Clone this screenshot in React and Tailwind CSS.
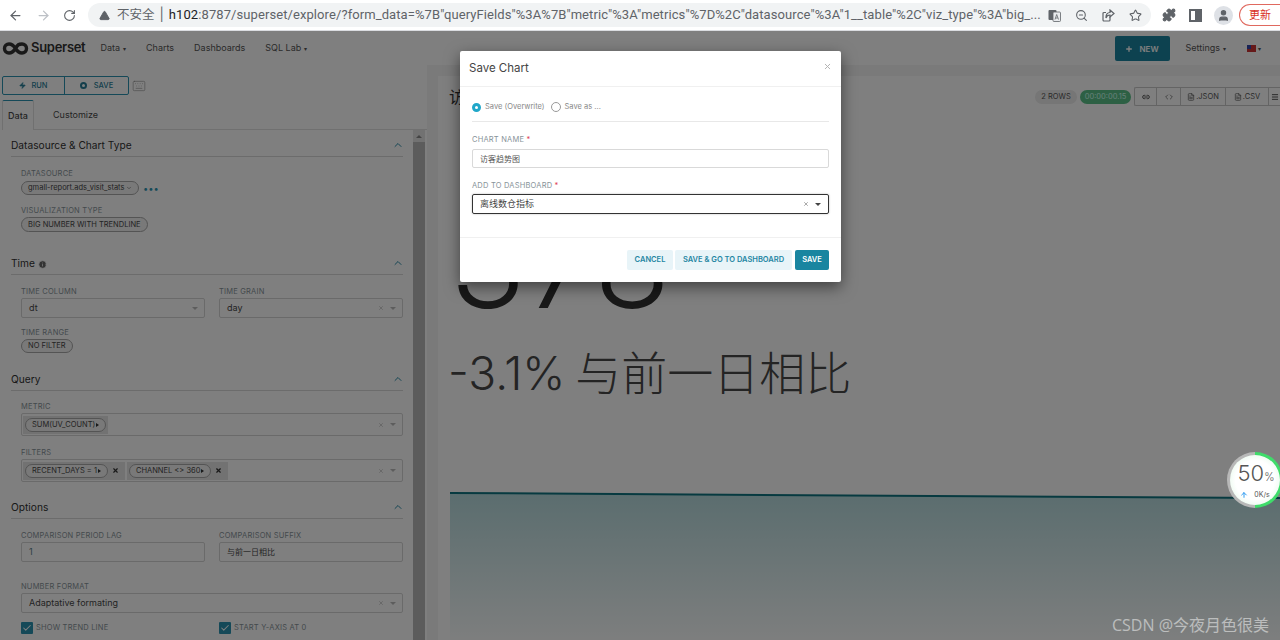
import { ArrowLeft, ArrowRight, RotateCw, TriangleAlert, ZoomOut, Star, Puzzle, User, Plus, Zap, Keyboard, ChevronDown, ChevronUp, Info, X, Link2, Code, FileText, Check, Menu, ArrowUp } from 'lucide-react';

const LABEL = 'text-[7.5px] leading-[10px] tracking-[0.2px] text-[#879399] uppercase';

function Carets({ clear = true }) {
  return (
    <div className="flex items-center gap-[6px] ml-auto pr-[6px] text-[#b5b5b5]">
      {clear && <X size={6} strokeWidth={2.5} />}
      <span className="w-0 h-0 border-x-[3.5px] border-x-transparent border-t-[3.5px] border-t-[#bbbbbb]" />
    </div>
  );
}

function Section({ title, info, top, children }) {
  return (
    <div className={top}>
      <div className="flex items-center h-[21px] border-b border-[#d9d9d9] ml-[11px] w-[392px]">
        <span className="text-[10.2px] text-[#323232]">{title}</span>
        {info && <Info size={9} className="ml-[3px] text-white fill-[#666]" />}
        <ChevronUp size={12} strokeWidth={2} className="ml-auto mr-[-1px] mb-[3px] text-[#2a8ca8]" />
      </div>
      <div className="pl-[21px]">{children}</div>
    </div>
  );
}

function Pill({ children, className = '' }) {
  return (
    <span className={`flex w-fit items-center h-[14px] px-[6px] rounded-full border border-[#a8a8a8] bg-[#f2f2f2] text-[7.5px] text-[#484848] whitespace-nowrap ${className}`}>
      {children}
    </span>
  );
}

function Select({ value, clear, className = '' }) {
  return (
    <div className={`flex items-center h-[20px] border border-[#d4d4d4] rounded-[2px] bg-white pl-[7px] text-[9px] text-[#484848] ${className}`}>
      {value}
      <Carets clear={clear} />
    </div>
  );
}

function Tag({ text, remove }) {
  return (
    <div className="flex items-center h-[18px] bg-[#e4e4e4] px-[2px] mr-[2px]">
      <Pill>{text}<span className="ml-[1px] w-0 h-0 border-y-[2.5px] border-y-transparent border-l-[3px] border-l-[#333]" /></Pill>
      {remove && <X size={7} strokeWidth={4} className="mx-[4px] text-[#333]" />}
    </div>
  );
}

function Sidebar() {
  return (
    <div className="w-[427px] shrink-0 bg-white pl-[2px] pt-[11px]">
      <div className="flex items-center">
        <div className="flex h-[19px] w-[127px] border border-[#2a93b0] rounded-[2px] text-[7.5px] text-[#2a7f99] font-medium">
          <div className="w-[62px] flex items-center justify-center gap-[5px] border-r border-[#2a93b0]"><Zap size={7} fill="currentColor" />RUN</div>
          <div className="flex-1 flex items-center justify-center gap-[7px]"><span className="w-[7px] h-[7px] rounded-full border-2 border-[#2a7f99]" />SAVE</div>
        </div>
        <Keyboard size={14} strokeWidth={1} className="ml-[3px] text-[#888]" />
      </div>
      <div className="flex mt-[5px] h-[30px] border-b border-[#e0e0e0] text-[9px] text-[#484848]">
        <div className="w-[32px] h-[30px] bg-white border-t border-x border-t-[#2a93b0] border-x-[#e0e0e0] rounded-t-[2px] flex items-center justify-center font-medium">Data</div>
        <div className="ml-[10px] px-[9px] flex items-center">Customize</div>
      </div>
      <div className="flex">
        <div className="w-[412px] -ml-[2px] overflow-hidden h-[510px]">
          <Section title="Datasource & Chart Type" top="mt-[6px]">
            <div className={`${LABEL} mt-[12px]`}>Datasource</div>
            <div className="flex items-center mt-[2px]">
              <Pill className="gap-[2px]">gmall-report.ads_visit_stats<ChevronDown size={6} /></Pill>
              <span className="ml-[4px] text-[#2a93b0] text-[9px] font-bold leading-none tracking-[1px]">•••</span>
            </div>
            <div className={`${LABEL} mt-[11px]`}>Visualization Type</div>
            <Pill className="mt-[1px] h-[15px]">BIG NUMBER WITH TRENDLINE</Pill>
          </Section>
          <Section title="Time" info top="mt-[22px]">
            <div className="grid grid-cols-[184px_184px] gap-x-[14px] mt-[12px]">
              <div>
                <div className={LABEL}>Time Column</div>
                <Select value="dt" clear={false} className="mt-[1px]" />
              </div>
              <div>
                <div className={LABEL}>Time Grain</div>
                <Select value="day" clear className="mt-[1px]" />
              </div>
            </div>
            <div className={`${LABEL} mt-[10px]`}>Time Range</div>
            <Pill className="mt-[1px]">NO FILTER</Pill>
          </Section>
          <Section title="Query" top="mt-[17px]">
            <div className={`${LABEL} mt-[11px]`}>Metric</div>
            <div className="flex items-center w-[382px] h-[23px] mt-[1px] border border-[#d4d4d4] rounded-[2px] bg-white pl-[1px]">
              <Tag text="SUM(UV_COUNT)" />
              <Carets />
            </div>
            <div className={`${LABEL} mt-[12px]`}>Filters</div>
            <div className="flex items-center w-[382px] h-[23px] mt-[1px] border border-[#d4d4d4] rounded-[2px] bg-white pl-[1px]">
              <Tag text="RECENT_DAYS = 1" remove />
              <Tag text="CHANNEL <> 360" remove />
              <Carets />
            </div>
          </Section>
          <Section title="Options" top="mt-[16px]">
            <div className="grid grid-cols-[184px_184px] gap-x-[14px] mt-[12px]">
              <div>
                <div className={LABEL}>Comparison Period Lag</div>
                <div className="flex items-center h-[20px] mt-[1px] pl-[7px] border border-[#d4d4d4] rounded-[2px] bg-white text-[9px] text-[#5b7f8a]">1</div>
              </div>
              <div>
                <div className={LABEL}>Comparison Suffix</div>
                <div className="flex items-center h-[20px] mt-[1px] pl-[7px] border border-[#d4d4d4] rounded-[2px] bg-white text-[8px] text-[#484848]">与前一日相比</div>
              </div>
            </div>
            <div className={`${LABEL} mt-[20px]`}>Number Format</div>
            <Select value="Adaptative formating" clear className="mt-[1px] w-[382px]" />
            <div className="grid grid-cols-[184px_184px] gap-x-[14px] mt-[9px]">
              {['Show Trend Line', 'Start Y-Axis at 0'].map((t) => (
                <div key={t} className="flex items-center">
                  <span className="w-[12px] h-[12px] bg-[#2a93b0] rounded-[1px] flex items-center justify-center">
                    <Check size={10} strokeWidth={2.5} className="text-white" />
                  </span>
                  <span className={`${LABEL} ml-[3px]`}>{t}</span>
                </div>
              ))}
            </div>
          </Section>
        </div>
        <div className="w-[12px] ml-[1px] bg-[#e4e4e4] flex flex-col">
          <div className="h-[12px] flex items-center justify-center">
            <span className="w-0 h-0 border-x-[3px] border-x-transparent border-b-[3px] border-b-[#888]" />
          </div>
          <div className="flex-1 bg-[#b8b8b8]" />
        </div>
      </div>
    </div>
  );
}

function TrendChart() {
  return (
    <svg width="830" height="148" viewBox="0 0 830 148" className="block">
      <defs>
        <linearGradient id="trend" x1="0" y1="0" x2="0" y2="1">
          <stop offset="0" stopColor="#b6dbde" />
          <stop offset="1" stopColor="#fbfdfd" />
        </linearGradient>
      </defs>
      <path d="M0 1 L830 6 V148 H0 Z" fill="url(#trend)" />
      <path d="M0 1 L830 6" fill="none" stroke="#0f7480" strokeWidth="2" />
    </svg>
  );
}

function ChartPanel() {
  return (
    <div className="flex-1 ml-[11px] mt-[11px] bg-white min-w-0 overflow-hidden">
      <div className="flex items-start h-[46px] pl-[11px] pt-[11px]">
        <span className="text-[16px] leading-[20px] text-[#333]">访客趋势图</span>
        <div className="ml-auto flex items-center">
          <span className="flex items-center justify-center w-[42px] h-[14px] mr-[3px] rounded-full bg-[#ececec] text-[7.5px] text-[#555]">2 ROWS</span>
          <span className="flex items-center justify-center w-[51px] h-[14px] rounded-full bg-[#5ac189] text-[7.5px] text-[#cfe]">00:00:00.15</span>
          <div className="flex h-[19px] ml-[3px] w-[146px] border border-r-0 border-[#c8c8c8] rounded-l-[2px] text-[7.5px] text-[#555]">
            <span className="w-[22px] flex items-center justify-center border-r border-[#c8c8c8]"><Link2 size={8} strokeWidth={3} /></span>
            <span className="w-[24px] flex items-center justify-center border-r border-[#c8c8c8]"><Code size={8} /></span>
            <span className="w-[45px] flex items-center justify-center gap-[1px] border-r border-[#c8c8c8]"><FileText size={8} />.JSON</span>
            <span className="w-[43px] flex items-center justify-center gap-[1px] border-r border-[#c8c8c8]"><FileText size={8} />.CSV</span>
            <span className="flex-1 flex items-center justify-center"><Menu size={8} strokeWidth={3} /></span>
          </div>
        </div>
      </div>
      <div className="pl-[12px]">
        <div className="text-[125px] leading-[125px] mt-[78px] font-light text-[#333]">378</div>
        <div className="text-[46px] leading-[56px] -ml-[2px] mt-[20px] font-light text-[#484848] whitespace-nowrap [word-spacing:-3px]">-3.1% 与前一日相比</div>
        <div className="mt-[91px]"><TrendChart /></div>
      </div>
    </div>
  );
}

function SaveModal() {
  return (
    <div className="absolute left-[460px] top-[20px] w-[381px] h-[231px] bg-white rounded-[2px] shadow-[0_5px_15px_rgba(0,0,0,0.5)] flex flex-col text-[#555]">
      <div className="flex items-center h-[36px] px-[9px] border-b border-[#f0f0f0]">
        <span className="text-[11.5px] text-[#444]">Save Chart</span>
        <X size={9} strokeWidth={2.5} className="ml-auto mb-[4px] text-[#b0b0b0]" />
      </div>
      <div className="flex-1 px-[12px]">
        <div className="flex items-center h-[35px] pt-[6px] border-b border-[#e8e8e8] text-[7.5px] text-[#888]">
          <span className="w-[9px] h-[9px] rounded-full border-[3px] border-[#20a7c9] bg-white" />
          <span className="ml-[4px]">Save (Overwrite)</span>
          <span className="ml-[6px] w-[10px] h-[10px] rounded-full border border-[#999]" />
          <span className="ml-[4px]">Save as ...</span>
        </div>
        <div className={`${LABEL} mt-[13px]`}>Chart Name <span className="text-[#e04355]">*</span></div>
        <div className="flex items-center h-[19px] mt-[4px] pl-[7px] border border-[#d9d9d9] rounded-[2px] text-[8px] text-[#555]">访客趋势图</div>
        <div className={`${LABEL} mt-[13px]`}>Add to Dashboard <span className="text-[#e04355]">*</span></div>
        <div className="flex items-center h-[20px] mt-[3px] pl-[7px] border border-[#333] rounded-[2px] shadow-[0_0_2px_rgba(0,0,0,0.3)] text-[9px] text-[#444]">
          离线数仓指标
          <div className="flex items-center gap-[6px] ml-auto pr-[7px]">
            <X size={6} strokeWidth={2.5} className="text-[#777]" />
            <span className="w-0 h-0 border-x-[3px] border-x-transparent border-t-[3px] border-t-[#444]" />
          </div>
        </div>
      </div>
      <div className="flex justify-end items-center h-[45px] pr-[12px] border-t border-[#f0f0f0] text-[7.5px] font-semibold text-[#1f86a3]">
        <button className="w-[46px] h-[20px] rounded-[2px] bg-[#e8f4f8]">CANCEL</button>
        <button className="ml-[2px] w-[117px] h-[20px] rounded-[2px] bg-[#e8f4f8]">SAVE &amp; GO TO DASHBOARD</button>
        <button className="ml-[3px] w-[34px] h-[20px] rounded-[2px] bg-[#1985a0] text-white">SAVE</button>
      </div>
    </div>
  );
}

function BrowserBar() {
  return (
    <div className="flex items-center h-[31px] bg-white border-b border-[#dadce0] text-[#5f6368]">
      <div className="flex items-center w-[63px] pl-[8px] gap-[13px]">
        <ArrowLeft size={15} />
        <ArrowRight size={15} className="text-[#bdc1c6]" />
      </div>
      <RotateCw size={13} />
      <div className="flex items-center ml-[12px] w-[1063px] h-[24px] rounded-full bg-[#f1f3f4] pl-[11px] overflow-hidden">
        <TriangleAlert size={11} fill="#5f6368" className="text-[#5f6368]" />
        <span className="ml-[7px] text-[12.5px] text-[#5f6368]">不安全</span>
        <span className="mx-[5px] text-[13px] text-[#5f6368]">|</span>
        <span className="text-[13px] tracking-[0.085px] text-[#5f6368] whitespace-nowrap font-['Roboto',sans-serif]"><span className="text-[#202124]">h102</span>:8787/superset/explore/?form_data=%7B"queryFields"%3A%7B"metric"%3A"metrics"%7D%2C"datasource"%3A"1__table"%2C"viz_type"%3A"big_...</span>
        <div className="ml-auto flex items-center gap-[14px] pr-[9px]">
          <svg width="13" height="13" viewBox="0 0 13 13">
            <rect x="0.5" y="1" width="8" height="10" rx="1" fill="#5f6368" />
            <rect x="5" y="3" width="7.500" height="9.500" rx="1" fill="#e8eaed" stroke="#5f6368" strokeWidth="0.8" />
            <path d="M7 10.500 8.700 5.500 10.500 10.500M7.700 9h2" fill="none" stroke="#5f6368" strokeWidth="0.8" />
          </svg>
          <ZoomOut size={13} />
          <svg width="13" height="13" viewBox="0 0 13 13" fill="none" stroke="#5f6368" strokeWidth="1.200">
            <path d="M8 7.500v3.500a1 1 0 0 1-1 1H2a1 1 0 0 1-1-1V4.500a1 1 0 0 1 1-1h2" />
            <path d="M8 1l4 3.500L8 8V6C6 6 4.500 7 4 9c-.3-3.500 1.500-5.500 4-5.500Z" />
          </svg>
          <Star size={13} />
        </div>
      </div>
      <Puzzle size={14} fill="#5f6368" className="ml-[11px]" />
      <span className="ml-[13px] w-[13px] h-[13px] border-2 border-[#5f6368] flex justify-end"><span className="w-[5px] h-full bg-[#5f6368]" /></span>
      <span className="ml-[12px] w-[19px] h-[19px] rounded-full bg-[#dee1e6] flex items-center justify-center"><User size={13} fill="#5f6368" /></span>
      <span className="ml-[6px] w-[50px] h-[22px] rounded-l-full border border-[#e0695f] border-r-0 pl-[9px] -mr-[10px] flex items-center text-[11px] text-[#d93025]">更新</span>
    </div>
  );
}

function SuperNav() {
  return (
    <div className="flex items-center h-[34px] bg-white text-[9px] text-[#555]">
      <svg width="27" height="13" viewBox="0 0 27 13" className="ml-[2px]" fill="none" stroke="#333" strokeWidth="3.4">
        <path d="M13.500 6.500C11 2.500 9.500 2 7 2a4.500 4.500 0 0 0 0 9c2.500 0 4-.5 6.500-4.500S16.500 2 20 2a4.500 4.500 0 0 1 0 9c-2.500 0-4-.5-6.500-4.500Z" />
      </svg>
      <span className="ml-[2px] text-[13px] font-semibold text-[#333] tracking-[-0.3px]">Superset</span>
      <span className="ml-[15px]">Data</span><span className="ml-[3px] text-[6px]">▾</span>
      <span className="ml-[20px]">Charts</span>
      <span className="ml-[20px]">Dashboards</span>
      <span className="ml-[20px]">SQL Lab</span><span className="ml-[3px] text-[6px]">▾</span>
      <button className="ml-auto flex items-center justify-center gap-[6px] w-[55px] h-[25px] rounded-[2px] bg-[#1a85a0] text-white text-[8px] font-semibold mt-[1px]"><Plus size={8} strokeWidth={4} />NEW</button>
      <span className="ml-[16px]">Settings</span><span className="ml-[3px] text-[6px]">▾</span>
      <span className="ml-[21px] flex flex-col w-[9px] h-[7px] bg-[#c33]"><span className="w-[4px] h-[4px] bg-[#34a]" /></span><span className="ml-[2px] mr-[19px] text-[6px]">▾</span>
    </div>
  );
}

export default function App() {
  return (
    <div className="relative w-[1280px] h-[640px] overflow-hidden bg-white font-['Inter','Noto_Sans_CJK_SC',sans-serif]">
      <BrowserBar />
      <div className="relative h-[609px] overflow-hidden">
        <SuperNav />
        <div className="flex h-[575px] bg-[#f5f5f5]">
          <Sidebar />
          <ChartPanel />
        </div>
        <div className="absolute inset-0 bg-black/50" />
        <SaveModal />
      </div>

      <div className="absolute left-[1227px] top-[452px] w-[56px] h-[56px] rounded-full p-[3px] bg-[conic-gradient(#3fdc6a_0_50%,#b8b8b8_50%_100%)]">
        <div className="w-full h-full rounded-full bg-[radial-gradient(circle,#ffffff_55%,#d8f5de_100%)] flex flex-col items-center pt-[5px] text-[#555]">
          <span className="text-[22px] leading-[26px] font-light pl-[2px]">50<span className="text-[11px]">%</span></span>
          <span className="flex items-center gap-[6px] text-[7px] leading-[10px]"><ArrowUp size={8} strokeWidth={3} className="text-[#2f9bf0]" />0K/s</span>
        </div>
      </div>
      <div className="absolute left-[1112px] top-[615px] text-[16px] leading-[20px] text-white/50 font-['Open_Sans','Noto_Sans_CJK_SC',sans-serif]">CSDN @今夜月色很美</div>
    </div>
  );
}
